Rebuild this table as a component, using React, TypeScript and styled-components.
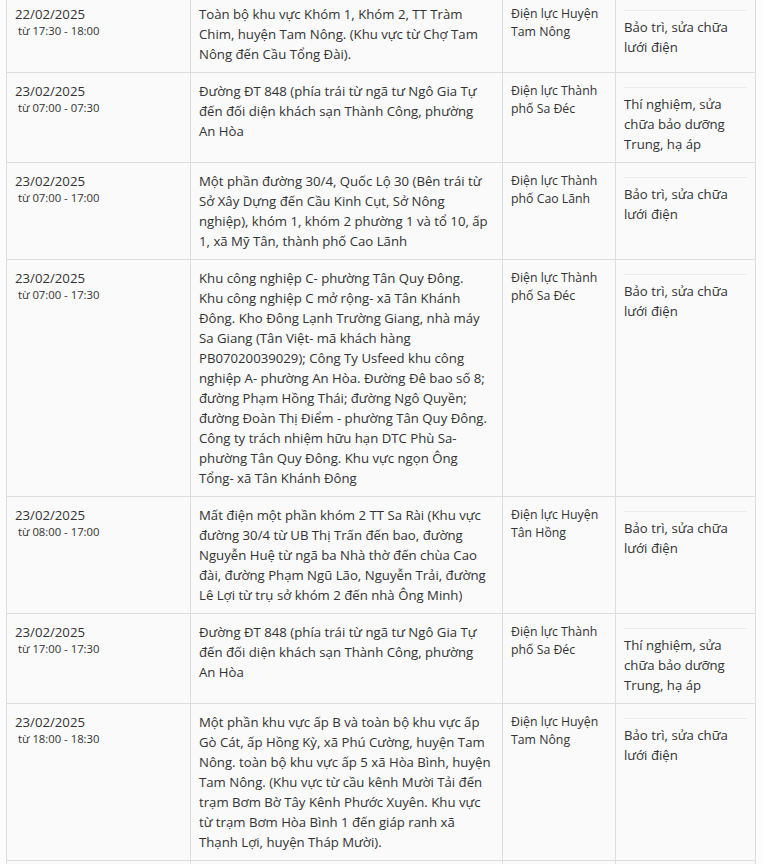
import React from "react";
import styled, { createGlobalStyle } from "styled-components";

const Global = createGlobalStyle`
  body {
    margin: 0;
    background: #fcfcfc;
    color: #333;
    font-family: "Open Sans", "Noto Sans", sans-serif;
  }
`;

type Outage = {
  date: string;
  time: string;
  area: string;
  unit: string;
  reason: string;
};

const outages: Outage[] = [
  {
    date: "22/02/2025",
    time: "từ 17:30 - 18:00",
    area: "Toàn bộ khu vực Khóm 1, Khóm 2, TT Tràm Chim, huyện Tam Nông. (Khu vực từ Chợ Tam Nông đến Cầu Tổng Đài).",
    unit: "Điện lực Huyện Tam Nông",
    reason: "Bảo trì, sửa chữa lưới điện",
  },
  {
    date: "23/02/2025",
    time: "từ 07:00 - 07:30",
    area: "Đường ĐT 848 (phía trái từ ngã tư Ngô Gia Tự đến đối diện khách sạn Thành Công, phường An\u00a0Hòa",
    unit: "Điện lực Thành phố Sa Đéc",
    reason: "Thí nghiệm, sửa chữa bảo dưỡng Trung, hạ áp",
  },
  {
    date: "23/02/2025",
    time: "từ 07:00 - 17:00",
    area: "Một phần đường 30/4, Quốc Lộ 30 (Bên trái từ Sở Xây Dựng đến Cầu Kinh Cụt, Sở Nông nghiệp), khóm 1, khóm 2 phường 1 và tổ 10, ấp 1, xã Mỹ Tân, thành phố Cao Lãnh",
    unit: "Điện lực Thành phố Cao Lãnh",
    reason: "Bảo trì, sửa chữa lưới điện",
  },
  {
    date: "23/02/2025",
    time: "từ 07:00 - 17:30",
    area: "Khu công nghiệp C- phường Tân Quy Đông. Khu\u00a0công nghiệp C mở rộng- xã Tân Khánh Đông. Kho Đông Lạnh Trường Giang, nhà máy Sa Giang (Tân Việt- mã khách hàng PB07020039029); Công Ty Usfeed khu công nghiệp A- phường An Hòa. Đường Đê bao số 8; đường Phạm Hồng Thái; đường Ngô Quyền; đường Đoàn Thị Điểm - phường Tân Quy Đông. Công ty trách nhiệm hữu hạn DTC Phù Sa- phường Tân Quy Đông. Khu vực ngọn Ông Tổng- xã Tân Khánh Đông",
    unit: "Điện lực Thành phố Sa Đéc",
    reason: "Bảo trì, sửa chữa lưới điện",
  },
  {
    date: "23/02/2025",
    time: "từ 08:00 - 17:00",
    area: "Mất điện một phần khóm 2 TT Sa Rài (Khu vực đường 30/4 từ UB Thị Trấn đến bao, đường Nguyễn Huệ từ ngã ba Nhà thờ đến chùa Cao đài, đường Phạm Ngũ Lão, Nguyễn Trải, đường Lê Lợi từ trụ sở khóm 2 đến nhà Ông Minh)",
    unit: "Điện lực Huyện Tân Hồng",
    reason: "Bảo trì, sửa chữa lưới điện",
  },
  {
    date: "23/02/2025",
    time: "từ 17:00 - 17:30",
    area: "Đường ĐT 848 (phía trái từ ngã tư Ngô Gia Tự đến đối diện khách sạn Thành Công, phường An\u00a0Hòa",
    unit: "Điện lực Thành phố Sa Đéc",
    reason: "Thí nghiệm, sửa chữa bảo dưỡng Trung, hạ áp",
  },
  {
    date: "23/02/2025",
    time: "từ 18:00 - 18:30",
    area: "Một phần khu vực ấp B và toàn bộ khu vực ấp Gò Cát, ấp Hồng Kỳ, xã Phú Cường, huyện Tam Nông. toàn bộ khu vực ấp 5 xã Hòa Bình, huyện Tam Nông. (Khu vực từ cầu kênh Mười Tải đến trạm Bơm Bờ Tây Kênh Phước Xuyên. Khu vực từ trạm Bơm Hòa Bình 1 đến giáp ranh xã Thạnh Lợi, huyện Tháp Mười).",
    unit: "Điện lực Huyện Tam Nông",
    reason: "Bảo trì, sửa chữa lưới điện",
  },
];

// page is scrolled a few pixels into the table
const Scroller = styled.div`
  height: 864px;
  overflow: hidden;
`;

const Table = styled.table`
  margin: -5px 0 0 6px;
  width: 750px;
  table-layout: fixed;
  border-collapse: separate;
  border-spacing: 0;
  border-top: 1px solid #ddd;
  border-left: 1px solid #ddd;
  background: #fafafa;
  font-size: 13.2px;
  line-height: 20px;
`;

const Cell = styled.td`
  vertical-align: top;
  padding: 8px;
  border-right: 1px solid #ddd;
  border-bottom: 1px solid #ddd;
  overflow-wrap: break-word;
`;

const UnitCell = styled(Cell)`
  padding-top: 9px;
  font-size: 12.3px;
  line-height: 18px;
`;

const DateText = styled.div`
  display: block;
`;

const TimeText = styled.div`
  font-size: 11.3px;
  line-height: 14px;
`;

const Reason = styled.div`
  margin-top: 6px;
  border-top: 1px solid #ececec;
  padding-top: 6px;
`;

const EmptyCell = styled(Cell)`
  height: 40px;
`;

export default function App() {
  return (
    <Scroller>
      <Global />
      <Table>
        <colgroup>
          <col style={{ width: 184 }} />
          <col style={{ width: 312 }} />
          <col style={{ width: 113 }} />
          <col style={{ width: 140 }} />
        </colgroup>
        <tbody>
          {outages.map((o, i) => (
            <tr key={i}>
              <Cell>
                <DateText>{o.date}</DateText>
                <TimeText>{"\u00a0" + o.time}</TimeText>
              </Cell>
              <Cell>{o.area}</Cell>
              <UnitCell>{o.unit}</UnitCell>
              <Cell>
                <Reason>{o.reason}</Reason>
              </Cell>
            </tr>
          ))}
          <tr>
            <EmptyCell />
            <EmptyCell />
            <EmptyCell />
            <EmptyCell />
          </tr>
        </tbody>
      </Table>
    </Scroller>
  );
}
